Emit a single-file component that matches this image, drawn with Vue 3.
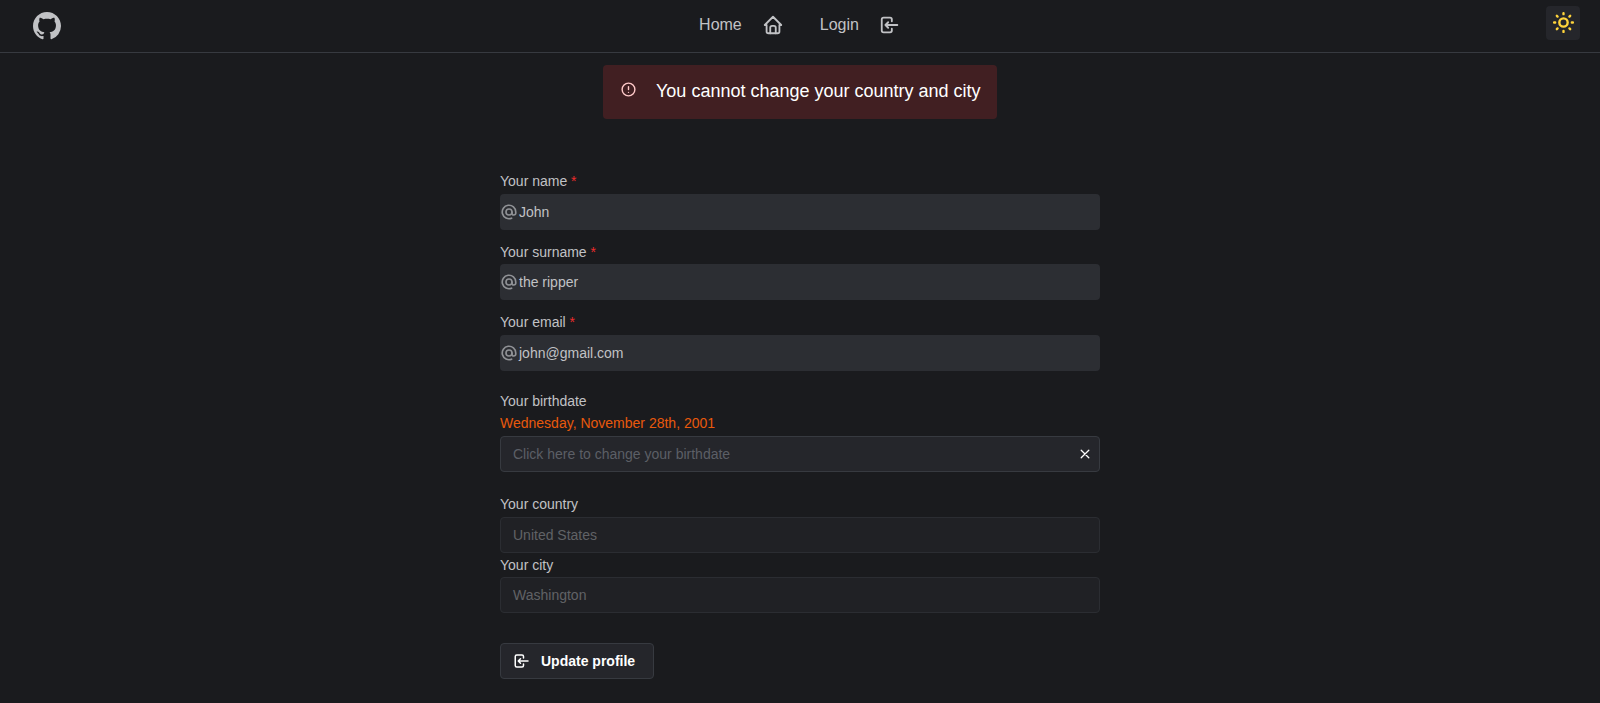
<script setup>
const textFields = [
  { label: 'Your name', value: 'John' },
  { label: 'Your surname', value: 'the ripper' },
  { label: 'Your email', value: 'john@gmail.com' },
]
</script>

<template>
  <div class="page">
    <header class="header">
      <svg class="github" viewBox="0 0 16 16" fill="currentColor">
        <path d="M8 0C3.58 0 0 3.58 0 8c0 3.54 2.29 6.53 5.47 7.59.4.07.55-.17.55-.38 0-.19-.01-.82-.01-1.49-2.01.37-2.53-.49-2.69-.94-.09-.23-.48-.94-.82-1.13-.28-.15-.68-.52-.01-.53.63-.01 1.08.58 1.23.82.72 1.21 1.87.87 2.33.66.07-.52.28-.87.51-1.07-1.78-.2-3.64-.89-3.64-3.95 0-.87.31-1.59.82-2.15-.08-.2-.36-1.02.08-2.12 0 0 .67-.21 2.2.82.64-.18 1.32-.27 2-.27s1.36.09 2 .27c1.53-1.04 2.2-.82 2.2-.82.44 1.1.16 1.92.08 2.12.51.56.82 1.27.82 2.15 0 3.07-1.87 3.75-3.65 3.95.29.25.54.73.54 1.48 0 1.07-.01 1.93-.01 2.2 0 .21.15.46.55.38A8.01 8.01 0 0 0 16 8c0-4.42-3.58-8-8-8z" />
      </svg>
      <nav class="nav">
        <a class="link">
          <span>Home</span>
          <svg class="icon nav-icon" viewBox="0 0 24 24">
            <path d="M5 12H3l9-9 9 9h-2M5 12v7a2 2 0 0 0 2 2h10a2 2 0 0 0 2-2v-7" />
            <path d="M9 21v-6a2 2 0 0 1 2-2h2a2 2 0 0 1 2 2v6" />
          </svg>
        </a>
        <a class="link">
          <span>Login</span>
          <svg class="icon nav-icon" viewBox="0 0 24 24">
            <path d="M14 8V6a2 2 0 0 0-2-2H5a2 2 0 0 0-2 2v12a2 2 0 0 0 2 2h7a2 2 0 0 0 2-2v-2" />
            <path d="M20 12H7l3-3m0 6-3-3" />
          </svg>
        </a>
      </nav>
      <button class="theme" type="button">
        <svg class="icon sun" viewBox="0 0 24 24">
          <circle cx="12" cy="12" r="4" />
          <path d="M3 12h1m8-9v1m8 8h1m-9 8v1M5.6 5.6l.7.7m12.1-.7-.7.7m0 11.4.7.7m-12.1-.7-.7.7" />
        </svg>
      </button>
    </header>

    <div class="alert">
      <svg class="icon alert-icon" viewBox="0 0 24 24">
        <circle cx="12" cy="12" r="9" />
        <path d="M12 8v4m0 4h.01" />
      </svg>
      <span>You cannot change your country and city</span>
    </div>

    <form class="form">
      <div v-for="field in textFields" :key="field.label" class="field">
        <label class="label">{{ field.label }} <span class="required">*</span></label>
        <div class="box filled">
          <svg class="icon at" viewBox="0 0 24 24">
            <circle cx="12" cy="12" r="4" />
            <path d="M16 12v1.500a2.500 2.500 0 0 0 5 0V12a9 9 0 1 0-5.500 8.280" />
          </svg>
          <span>{{ field.value }}</span>
        </div>
      </div>

      <div class="birth">
        <label class="label">Your birthdate</label>
        <div class="date">Wednesday, November 28th, 2001</div>
        <div class="box outlined">
          <span class="placeholder">Click here to change your birthdate</span>
          <svg class="clear" viewBox="0 0 10 10"><path d="m1.200 1.200 7.600 7.600m0-7.600-7.600 7.600" /></svg>
        </div>
      </div>

      <div class="country">
        <label class="label">Your country</label>
        <div class="box outlined disabled">United States</div>
      </div>
      <div class="city">
        <label class="label">Your city</label>
        <div class="box outlined disabled">Washington</div>
      </div>

      <button class="submit" type="button">
        <svg class="icon submit-icon" viewBox="0 0 24 24">
          <path d="M14 8V6a2 2 0 0 0-2-2H5a2 2 0 0 0-2 2v12a2 2 0 0 0 2 2h7a2 2 0 0 0 2-2v-2" />
          <path d="M20 12H7l3-3m0 6-3-3" />
        </svg>
        <span>Update profile</span>
      </button>
    </form>
  </div>
</template>

<style>
body {
  margin: 0;
  background: #1a1b1e;
}
</style>

<style scoped>
.page {
  box-sizing: border-box;
  height: 703px;
  overflow: hidden;
  background: #1a1b1e;
  color: #c1c2c5;
  font-family: "Liberation Sans", Arial, sans-serif;
  font-size: 14px;
  line-height: 22px;
}
.icon {
  display: block;
  flex: none;
  fill: none;
  stroke: currentColor;
  stroke-width: 2;
  stroke-linecap: round;
  stroke-linejoin: round;
}
.header {
  box-sizing: border-box;
  display: grid;
  grid-template-columns: 1fr auto 1fr;
  align-items: start;
  height: 53px;
  padding: 0 20px;
  border-bottom: 1px solid #373a40;
}
.github {
  width: 28px;
  height: 28px;
  margin: 12px 0 0 13px;
}
.nav {
  display: flex;
  gap: 36px;
  margin-top: 12px;
  font-size: 16px;
  line-height: 25px;
}
.link {
  display: flex;
  gap: 20px;
}
.nav-icon {
  width: 22px;
  height: 22px;
  margin-top: 2px;
}
.theme {
  display: flex;
  align-items: center;
  justify-content: center;
  justify-self: end;
  width: 34px;
  height: 34px;
  margin-top: 6px;
  padding: 0;
  border: 0;
  border-radius: 4px;
  background: #25262b;
  color: #ffd43b;
}
.sun {
  width: 25px;
  height: 25px;
  margin-top: -1px;
  stroke-width: 2.300;
}
.alert {
  box-sizing: border-box;
  display: flex;
  align-items: flex-start;
  width: 394px;
  height: 54px;
  margin: 12px auto 0;
  padding: 12px 16px;
  border-radius: 4px;
  background: rgba(224, 49, 49, 0.2);
  color: #fff;
  font-size: 18px;
  line-height: 28px;
  white-space: nowrap;
}
.alert-icon {
  width: 17px;
  height: 17px;
  margin: 3.500px 19.500px 0 0.500px;
  color: #ffc9c9;
}
.form {
  width: 600px;
  margin: 51px auto 0;
}
.field {
  height: 70.350px;
}
.field:nth-child(2) .label {
  padding-top: 0.500px;
}
.label {
  box-sizing: border-box;
  display: block;
  height: 24px;
  line-height: 22px;
}
.required {
  color: #ee2c2c;
}
.box {
  box-sizing: border-box;
  display: flex;
  align-items: center;
  height: 36px;
  border-radius: 4px;
}
.filled {
  background: #2c2e33;
}
.at {
  width: 18px;
  height: 18px;
  margin-right: 1px;
  color: #909296;
  stroke-width: 2.200;
}
.outlined {
  padding: 0 9px 0 12px;
  border: 1px solid #373a40;
  background: #25262b;
}
.birth {
  height: 103px;
  margin-top: 9px;
}
.birth .label {
  height: 22px;
}
.date {
  height: 22px;
  padding-bottom: 2px;
  line-height: 22px;
  color: #e8590c;
}
.placeholder {
  flex: 1;
  color: #5c5f66;
}
.clear {
  width: 10px;
  height: 10px;
  fill: none;
  stroke: #fff;
  stroke-width: 1.300;
  stroke-linecap: round;
}
.country {
  height: 60px;
}
.disabled {
  color: #909296;
  opacity: 0.6;
}
.city {
  height: 60px;
}
.city .label {
  padding-top: 1px;
}
.submit {
  box-sizing: border-box;
  display: flex;
  align-items: center;
  width: 154px;
  height: 36px;
  margin-top: 30px;
  padding: 0 0 0 12px;
  border: 1px solid #373a40;
  border-radius: 4px;
  background: #25262b;
  color: #fff;
  font: bold 14px "Liberation Sans", Arial, sans-serif;
}
.submit-icon {
  width: 18px;
  height: 18px;
  margin-right: 10px;
}
</style>
